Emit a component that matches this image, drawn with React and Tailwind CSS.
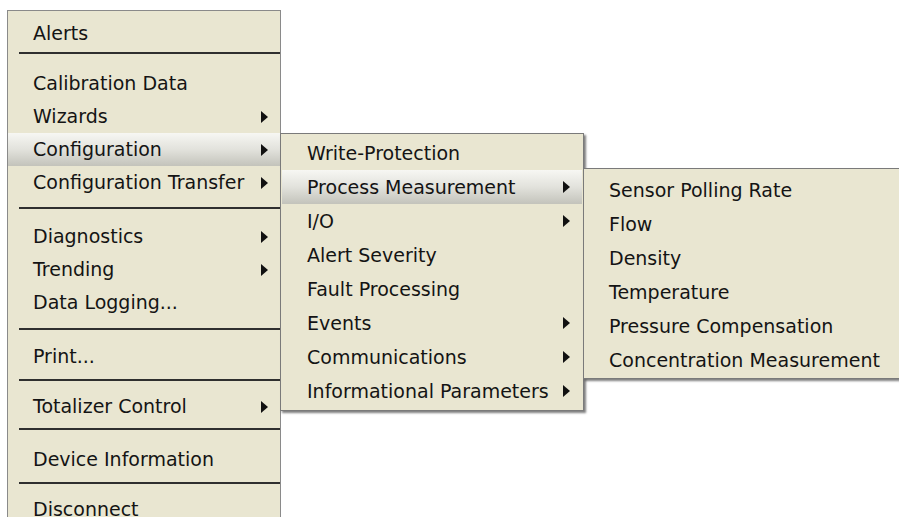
import React from "react";

const FONT = { fontFamily: '"DejaVu Sans", Verdana, sans-serif' };

function Arrow() {
  return (
    <svg width="7" height="12" viewBox="0 0 7 12" className="shrink-0">
      <polygon points="0,0 7,6 0,12" fill="#111" />
    </svg>
  );
}

function Item({ label, sub, hl, rowClass }) {
  return (
    <div
      className={
        "flex items-center justify-between pl-[25px] pr-[12px] text-[19px] leading-none text-[#141414] whitespace-nowrap " +
        rowClass +
        (hl ? " bg-gradient-to-b from-[#f7f7f3] via-[#e2e2dc] to-[#c3c3bb]" : "")
      }
    >
      <span>{label}</span>
      {sub ? <Arrow /> : null}
    </div>
  );
}

function Sep({ cls }) {
  return (
    <div className={"pl-[11px] " + cls}>
      <div className="h-[2px] bg-[#2f2f2f]" />
    </div>
  );
}

export default function App() {
  return (
    <div className="relative w-[899px] h-[517px] overflow-hidden bg-white" style={FONT}>
      {/* Main menu */}
      <div className="absolute left-[7px] top-[10px] w-[274px] h-[540px] bg-[#e9e6d1] border border-[#8a8a8a] pt-[6px]">
        <Item label="Alerts" rowClass="h-[33px]" />
        <Sep cls="h-[17px] pt-[2px]" />
        <Item label="Calibration Data" rowClass="h-[33px]" />
        <Item label="Wizards" sub rowClass="h-[33px]" />
        <Item label="Configuration" sub hl rowClass="h-[33px]" />
        <Item label="Configuration Transfer" sub rowClass="h-[33px]" />
        <Sep cls="h-[21px] pt-[8px]" />
        <Item label="Diagnostics" sub rowClass="h-[33px]" />
        <Item label="Trending" sub rowClass="h-[33px]" />
        <Item label="Data Logging..." rowClass="h-[33px]" />
        <Sep cls="h-[21px] pt-[9px]" />
        <Item label="Print..." rowClass="h-[33px]" />
        <Sep cls="h-[17px] pt-[6px]" />
        <Item label="Totalizer Control" sub rowClass="h-[33px]" />
        <Sep cls="h-[20px] pt-[5px]" />
        <Item label="Device Information" rowClass="h-[33px]" />
        <Sep cls="h-[17px] pt-[6px]" />
        <Item label="Disconnect" rowClass="h-[33px]" />
      </div>

      {/* Submenu 1 */}
      <div className="absolute left-[280px] top-[133px] w-[304px] bg-[#e9e6d1] border border-[#7a7a7a] px-[1px] pt-[2px] pb-[2px] shadow-[2px_2px_2px_rgba(0,0,0,0.5)]">
        <Item label="Write-Protection" rowClass="h-[34px]" />
        <Item label="Process Measurement" sub hl rowClass="h-[34px]" />
        <Item label="I/O" sub rowClass="h-[34px]" />
        <Item label="Alert Severity" rowClass="h-[34px]" />
        <Item label="Fault Processing" rowClass="h-[34px]" />
        <Item label="Events" sub rowClass="h-[34px]" />
        <Item label="Communications" sub rowClass="h-[34px]" />
        <Item label="Informational Parameters" sub rowClass="h-[34px]" />
      </div>

      {/* Submenu 2 */}
      <div className="absolute left-[583px] top-[168px] w-[340px] bg-[#e9e6d1] border border-[#7a7a7a] pt-[4px] pb-[1px] shadow-[2px_2px_2px_rgba(0,0,0,0.5)]">
        <Item label="Sensor Polling Rate" rowClass="h-[34px]" />
        <Item label="Flow" rowClass="h-[34px]" />
        <Item label="Density" rowClass="h-[34px]" />
        <Item label="Temperature" rowClass="h-[34px]" />
        <Item label="Pressure Compensation" rowClass="h-[34px]" />
        <Item label="Concentration Measurement" rowClass="h-[34px]" />
      </div>
    </div>
  );
}
